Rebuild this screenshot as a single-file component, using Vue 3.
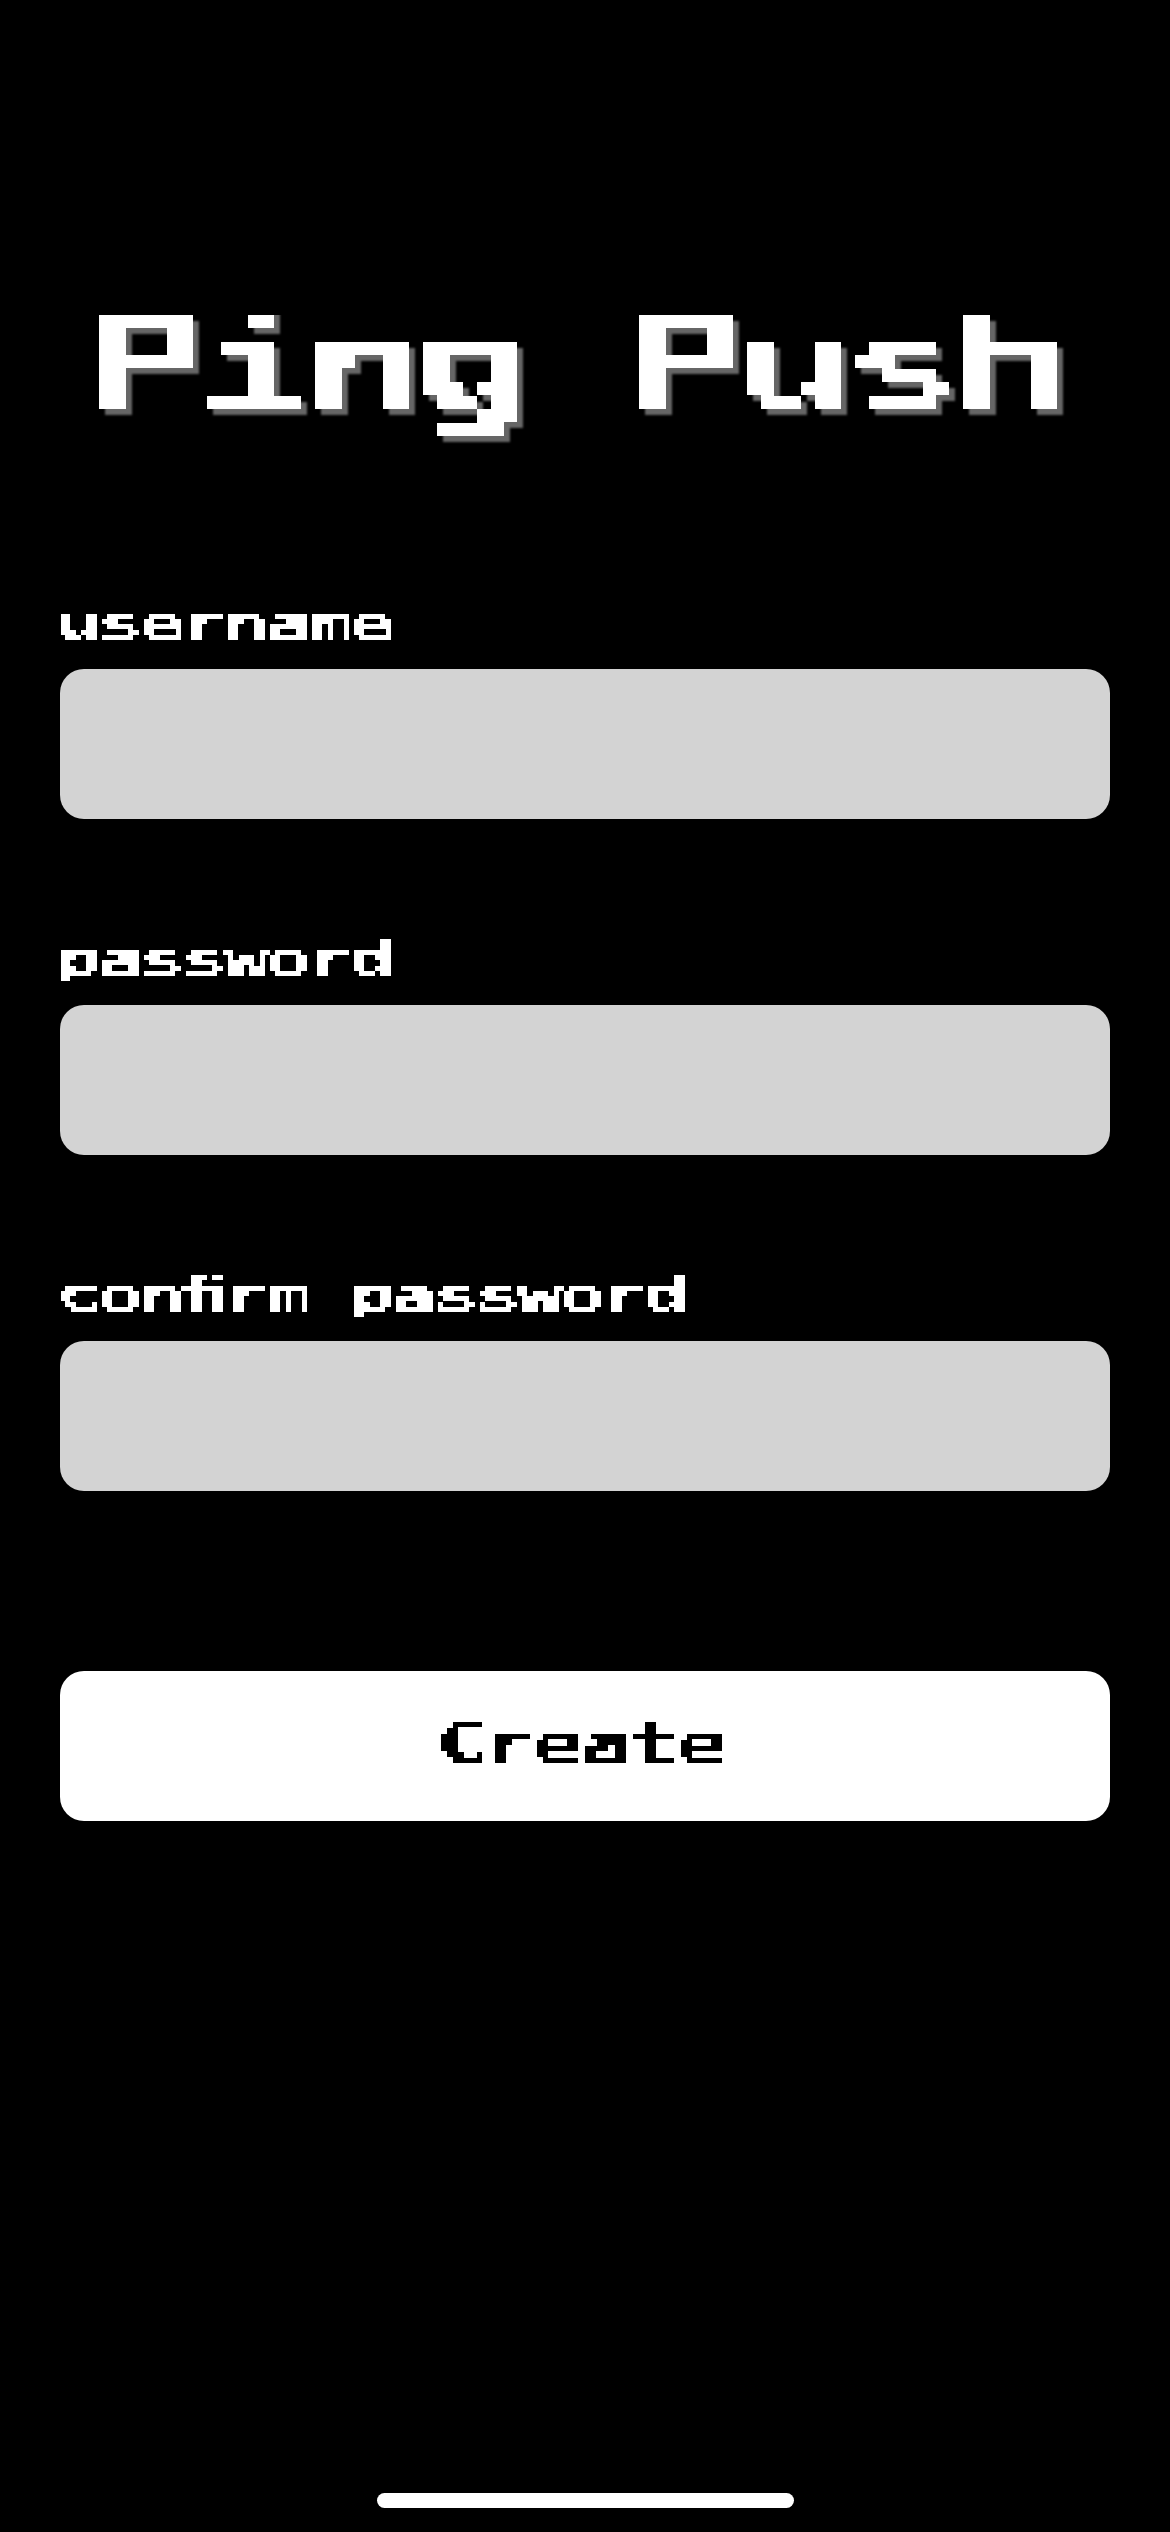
<script setup>
const fields = [
  { id: 'username', type: 'text', label: 'username' },
  { id: 'password', type: 'password', label: 'password' },
  { id: 'confirm', type: 'password', label: 'conﬁrm password' },
]

// Each mosaic samples the text at the dots of a repeating tile, then grows
// every hit into a block and closes the one-pixel seams between the blocks.
const mosaics = [
  { id: 'mosaic-title', tile: 27, dots: [6, 20], grow: 7, x: 12, y: 2 },
  { id: 'mosaic-label', tile: 21, dots: [2, 7, 13, 18], grow: 3, x: 0, y: 0 },
  { id: 'mosaic-button', tile: 12, dots: [2, 8], grow: 3, x: 3, y: 0 },
]
</script>

<template>
  <main class="screen">
    <svg class="filters" width="0" height="0" aria-hidden="true">
      <filter v-for="m in mosaics" :id="m.id" :key="m.id" filterUnits="userSpaceOnUse" x="0" y="0" width="1060" height="180" color-interpolation-filters="sRGB">
        <template v-for="(d, i) in m.dots" :key="i">
          <feFlood :x="m.x + d" :y="m.y" width="1" :height="m.tile" flood-color="#fff" :result="'col' + i" />
          <feFlood :x="m.x" :y="m.y + d" :width="m.tile" height="1" flood-color="#fff" :result="'row' + i" />
        </template>
        <feMerge result="cols">
          <feMergeNode v-for="(d, i) in m.dots" :key="i" :in="'col' + i" />
        </feMerge>
        <feMerge result="rows">
          <feMergeNode v-for="(d, i) in m.dots" :key="i" :in="'row' + i" />
        </feMerge>
        <feComposite in="cols" in2="rows" operator="in" :x="m.x" :y="m.y" :width="m.tile" :height="m.tile" />
        <feTile result="grid" />
        <feComposite in="SourceGraphic" in2="grid" operator="in" />
        <feComponentTransfer><feFuncA type="discrete" tableValues="0 1" /></feComponentTransfer>
        <feMorphology operator="dilate" :radius="m.grow" />
        <feMorphology operator="erode" radius="1" />
      </filter>
    </svg>
    <h1 class="title"><span class="wide">Ping Push</span></h1>
    <form class="form" @submit.prevent>
      <div v-for="field in fields" :key="field.id" class="field">
        <label class="label" :for="field.id"><span class="wide">{{ field.label }}</span></label>
        <input :id="field.id" class="input" :type="field.type" />
      </div>
      <button class="create" type="submit"><span class="face"><span class="wide">Create</span></span></button>
    </form>
    <div class="home-indicator"></div>
  </main>
</template>

<style>
body {
  margin: 0;
  background: #000;
}
</style>

<style scoped>
.screen {
  box-sizing: border-box;
  width: 1170px;
  height: 2532px;
  padding: 299px 60px 24px;
  display: flex;
  flex-direction: column;
  background: #000;
  color: #fff;
  font-family: 'DejaVu Sans Mono', monospace;
  font-weight: 700;
  overflow: hidden;
}

.filters {
  display: block;
}

.wide {
  display: inline-block;
  white-space: pre;
  letter-spacing: -0.0466em;
  transform: translateX(-0.085em) scaleX(1.5);
}

.title {
  margin: 0;
  text-align: center;
  font-size: 129.6px;
  line-height: 130px;
  filter: url(#mosaic-title) drop-shadow(6px 6px 1px #666);
  clip-path: inset(16px 0 -30px);
}

.form {
  margin-top: 169px;
  display: flex;
  flex-direction: column;
  gap: 115px;
}

.field {
  display: flex;
  flex-direction: column;
}

.label {
  margin-bottom: 21px;
  font-size: 50.4px;
  line-height: 50px;
  filter: url(#mosaic-label);
  clip-path: inset(5px 0 3px);
}

.label .wide {
  transform-origin: left;
  -webkit-text-stroke: 0.4px currentColor;
}

.input {
  box-sizing: border-box;
  width: 100%;
  height: 150px;
  padding: 0 30px;
  border: 0;
  border-radius: 24px;
  background: #d3d3d3;
  outline: none;
}

.create {
  margin-top: 65px;
  height: 150px;
  padding: 0 0 4px;
  border: 0;
  border-radius: 24px;
  background: #fff;
  color: #000;
  font: inherit;
  font-size: 57.6px;
}

.face {
  display: block;
  line-height: 68px;
  filter: url(#mosaic-button);
}

.face .wide {
  -webkit-text-stroke: 0.5px currentColor;
}

.home-indicator {
  width: 417px;
  height: 15px;
  margin: auto auto 0;
  border-radius: 8px;
  background: #fff;
}
</style>
